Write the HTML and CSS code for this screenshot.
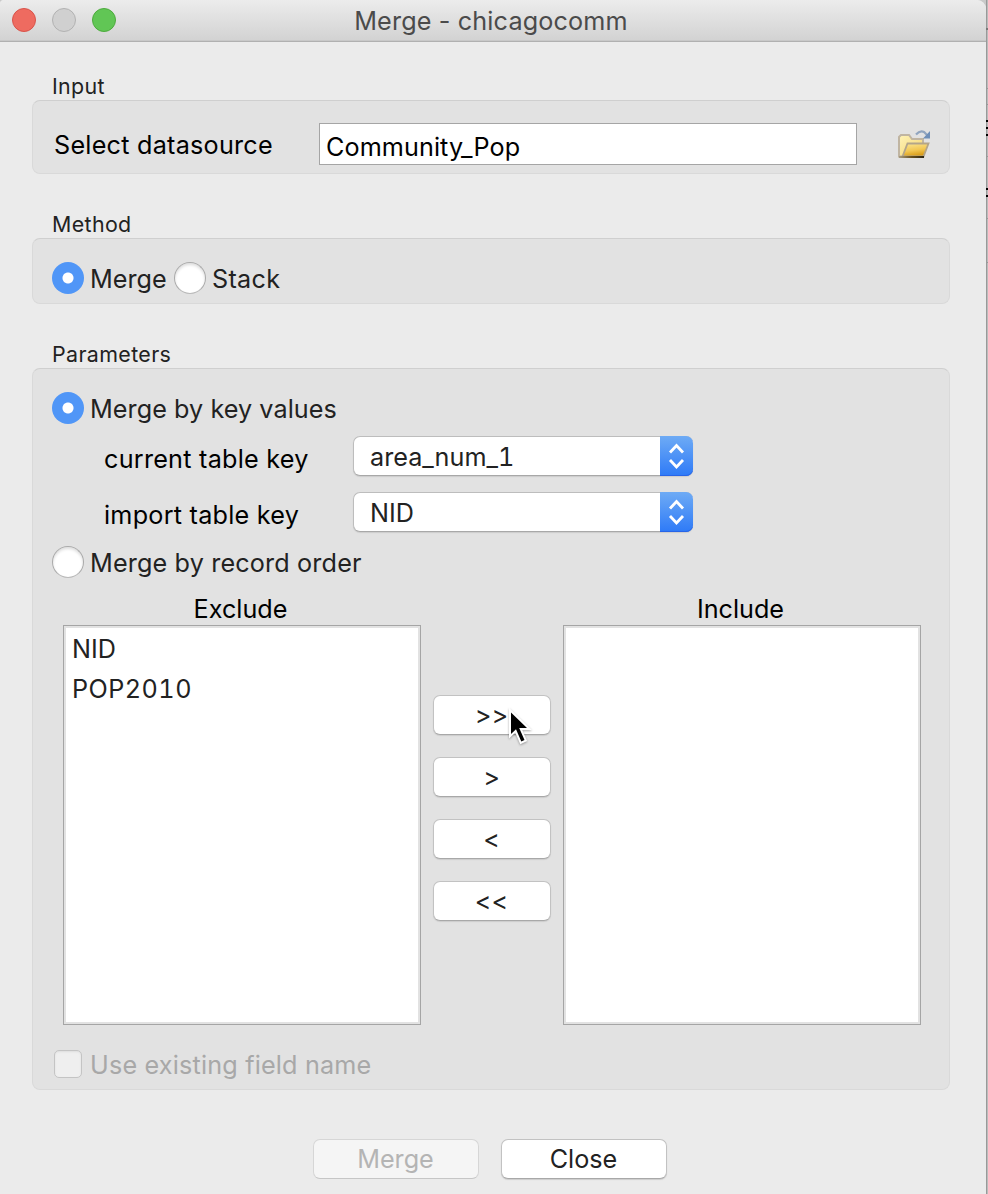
FILE: index.html
```html
<!DOCTYPE html>
<html lang="en">
<head>
<meta charset="utf-8">
<title>Merge - chicagocomm</title>
<link rel="stylesheet" href="styles.css">
</head>
<body>
<div class="desktop">
<main class="window">
  <header class="titlebar">
    <div class="lights"><span class="light red"></span><span class="light gray"></span><span class="light green"></span></div>
    <h1 class="title">Merge - chicagocomm</h1>
  </header>
  <div class="content">
    <section>
      <h2 class="group-title">Input</h2>
      <div class="panel source">
        <span class="source-label">Select datasource</span>
        <div class="field">Community_Pop</div>
        <svg class="folder" width="34" height="30" viewBox="0 0 34 30">
          <defs>
            <linearGradient id="back" x1="0" y1="0" x2="1" y2="1"><stop offset="0" stop-color="#fff3b8"/><stop offset="1" stop-color="#f3d46e"/></linearGradient>
            <linearGradient id="front" x1="0" y1="0" x2=".3" y2="1"><stop offset="0" stop-color="#fbe795"/><stop offset=".6" stop-color="#f2c753"/><stop offset="1" stop-color="#d99c17"/></linearGradient>
            <linearGradient id="base" gradientUnits="userSpaceOnUse" x1="1" y1="0" x2="26" y2="0"><stop offset="0" stop-color="#a89c83"/><stop offset=".5" stop-color="#69511d"/><stop offset="1" stop-color="#2d2616"/></linearGradient>
          </defs>
          <path d="M1 27.500V8l2-2h8l3 4h11v5l-2 12.500z" fill="url(#back)" stroke="#c0b5a2" stroke-width="2"/>
          <path d="M4.500 27.500L9.500 14.500H30.500L25.500 27.500z" fill="url(#front)" stroke="#b3a58a" stroke-width="1.800"/>
          <path d="M1 28h25" stroke="url(#base)" stroke-width="2"/>
          <path d="M18 5.500q4-4.500 8-2.500l3 3" fill="none" stroke="#91a5bf" stroke-width="2.200"/>
          <path d="M32 2v7.500h-7z" fill="#6f8fb8"/>
        </svg>
      </div>
    </section>
    <section>
      <h2 class="group-title">Method</h2>
      <div class="panel method">
        <span class="radio on"></span><span class="label method-label">Merge</span>
        <span class="radio"></span><span class="label stack-label">Stack</span>
      </div>
    </section>
    <section>
      <h2 class="group-title">Parameters</h2>
      <div class="panel params">
        <div class="row"><span class="radio on"></span><span class="label key-values">Merge by key values</span></div>
        <div class="key-row"><span class="key-label">current table key</span>
          <div class="select"><span class="select-text">area_num_1</span><span class="stepper"><svg width="33" height="40" viewBox="0 0 33 40"><path d="M10 16.500l6.500-7 6.500 7M10 24l6.500 7 6.500-7" fill="none" stroke="#fff" stroke-width="2.800"/></svg></span></div></div>
        <div class="key-row"><span class="key-label">import table key</span>
          <div class="select"><span class="select-text">NID</span><span class="stepper"><svg width="33" height="40" viewBox="0 0 33 40"><path d="M10 16.500l6.500-7 6.500 7M10 24l6.500 7 6.500-7" fill="none" stroke="#fff" stroke-width="2.800"/></svg></span></div></div>
        <div class="row record"><span class="radio"></span><span class="label record-label">Merge by record order</span></div>
        <div class="transfer">
          <div class="list-col"><span class="list-title">Exclude</span>
            <ul class="list"><li>NID</li><li class="wide-digits">POP2010</li></ul></div>
          <div class="moves">
            <div class="button move first">&gt;&gt;
              <svg class="cursor" width="28" height="42" viewBox="0 0 28 42"><path d="M4 5.500V27l5-4.700 5.300 12.200 3.200-1.500-5.300-12H20z" fill="#000" stroke="#fff" stroke-width="4" paint-order="stroke"/></svg>
            </div>
            <div class="button move">&gt;</div>
            <div class="button move">&lt;</div>
            <div class="button move">&lt;&lt;</div>
          </div>
          <div class="list-col"><span class="list-title">Include</span><ul class="list"></ul></div>
        </div>
        <div class="row existing"><span class="checkbox"></span><span class="label disabled-text">Use existing field name</span></div>
      </div>
    </section>
    <footer class="footer"><div class="button wide disabled">Merge</div><div class="button wide">Close</div></footer>
  </div>
</main>
<aside class="behind"></aside>
</div>
</body>
</html>
```
FILE: styles.css
```css
* { box-sizing: border-box; }
body { margin: 0; background: #c9c9c9; font-family: Inter, "Liberation Sans", sans-serif; font-size: 25.2px; line-height: 32px; color: #222; overflow: hidden; white-space: nowrap; }
.desktop { display: flex; width: 988px; height: 1194px; }
.window { width: 986px; height: 1194px; background: #ebebeb; border-radius: 4px 9px 0 0; overflow: hidden; }
.titlebar { display: grid; grid-template-columns: 116px 1fr 121px; height: 42px; background: linear-gradient(#ececec, #d2d2d2); border-bottom: 1px solid #b0b0b0; box-shadow: inset 0 -1px #c8c8c8; }
.lights { display: flex; gap: 16px; padding: 8px 0 0 12px; }
.light { width: 24px; height: 24px; border-radius: 50%; border: 1px solid; }
.red { background: #ee6b60; border-color: #d9534a; }
.gray { background: #d0d0d0; border-color: #b2b2b2; }
.green { background: #61c655; border-color: #4dab3d; }
.title { margin: 0; padding: 5px 0 0 1px; text-align: center; font-weight: 400; font-size: 25.2px; letter-spacing: .15px; color: #4b4b4b; }
.content { padding: 30px 36px 0 32px; }
.group-title { margin: 0 0 0 20px; font-size: 21.4px; line-height: 28px; font-weight: 400; letter-spacing: .37px; color: #222; }
.panel { width: 918px; margin-bottom: 36px; border: 1px solid #d9d9d9; border-top-color: #cfcfcf; border-radius: 8px; background: #e2e2e2; }
.source { display: flex; height: 74px; padding: 22px 0 0 21px; color: #000; }
.source-label { width: 265px; padding-top: 6px; letter-spacing: .24px; }
.field { width: 538px; height: 42px; border: 1px solid #a5a5a5; background: #fff; padding: 7px 0 0 6px; letter-spacing: .08px; }
.folder { margin: 6px 0 0 41px; }
.method { display: flex; height: 66px; padding: 23px 0 0 19px; }
.radio { flex: none; width: 32px; height: 32px; border: 1px solid #aaa; border-bottom-color: #b9b9b9; border-radius: 50%; background: #fff; box-shadow: inset 0 2px 3px #ddd; }
.radio.on { border: 0; background: radial-gradient(circle, #fff 0 5px, #5096f7 6px); box-shadow: none; }
.label { padding: 1px 0 0 6px; }
.method-label { width: 90px; }
.stack-label { letter-spacing: .3px; }
.key-values { letter-spacing: .06px; }
.record-label { letter-spacing: .15px; }
.params { height: 722px; padding: 23px 0 0 19px; }
.row { display: flex; height: 32px; }
.key-row { display: flex; height: 40px; margin-top: 12px; padding-left: 52px; color: #000; }
.key-row + .key-row { margin-top: 16px; }
.key-label { width: 249px; padding-top: 7px; letter-spacing: .24px; }
.select { display: flex; justify-content: space-between; width: 340px; height: 40px; border: 1px solid #bdbdbd; border-bottom-color: #a8a8a8; border-right: 0; border-radius: 7px; background: #fff; box-shadow: 0 1px 1px #ccc; color: #222; }
.select-text { padding: 4px 0 0 16px; font-variant-numeric: tabular-nums; }
.stepper { width: 33px; height: 40px; margin-top: -1px; border-radius: 0 7px 7px 0; background: linear-gradient(#6eabf5, #2e7af7); box-shadow: inset 0 -1px #2865e8; }
.stepper svg { display: block; }
.record { margin-top: 14px; }
.transfer { display: flex; gap: 12px; margin: 15px 0 0 11px; }
.list-col { display: flex; flex-direction: column; width: 358px; }
.list-title { padding-right: 3px; text-align: center; color: #000; }
.list { height: 400px; margin: 0; padding: 3px 8px; border: 1px solid #a5a5a5; background: #fff; box-shadow: inset 0 0 0 2px #e2e2e2; list-style: none; line-height: 40px; }
.wide-digits { font-variant-numeric: tabular-nums; letter-spacing: .45px; }
.moves { display: flex; flex-direction: column; gap: 22px; padding-top: 102px; }
.button { height: 40px; border: 1px solid #c2c2c2; border-bottom-color: #a8a8a8; border-radius: 7px; background: #fff; box-shadow: 0 1px 1px #ccc; text-align: center; padding: 3px 1px 0 0; color: #222; }
.move { width: 118px; }
.first { position: relative; }
.cursor { position: absolute; left: 73px; top: 11px; filter: drop-shadow(0 1px 1px #0005); }
.existing { margin-top: 23px; }
.checkbox { width: 28px; height: 28px; margin: 2px 2px 0; border: 1px solid #c4c4c4; border-radius: 5px; background: #efefef; box-shadow: inset 0 1px 2px #ddd; }
.disabled-text { color: #a8a8a8; letter-spacing: .18px; }
.footer { display: flex; gap: 22px; padding: 13px 0 0 281px; }
.wide { width: 166px; }
.disabled { background: #f5f5f5; border-color: #d6d6d6; border-bottom-color: #c6c6c6; box-shadow: none; color: #b4b4b4; }
.behind { width: 2px; background: linear-gradient(transparent 28px, #777 28px 30px, transparent 30px 88px, #999 88px 89px, transparent 89px 104px, #999 104px 105px, transparent 105px 120px, #000 120px 122px, transparent 122px 127px, #000 127px 129px, transparent 129px 134px, #000 134px 136px, transparent 136px 156px, #999 156px 157px, transparent 157px 188px, #000 188px 190px, transparent 190px 195px, #000 195px 197px, transparent 197px 218px, #999 218px 219px, transparent 219px 262px, #999 262px 263px, transparent 263px), linear-gradient(90deg, #999 1px, #bcbcbc 1px); }
```
